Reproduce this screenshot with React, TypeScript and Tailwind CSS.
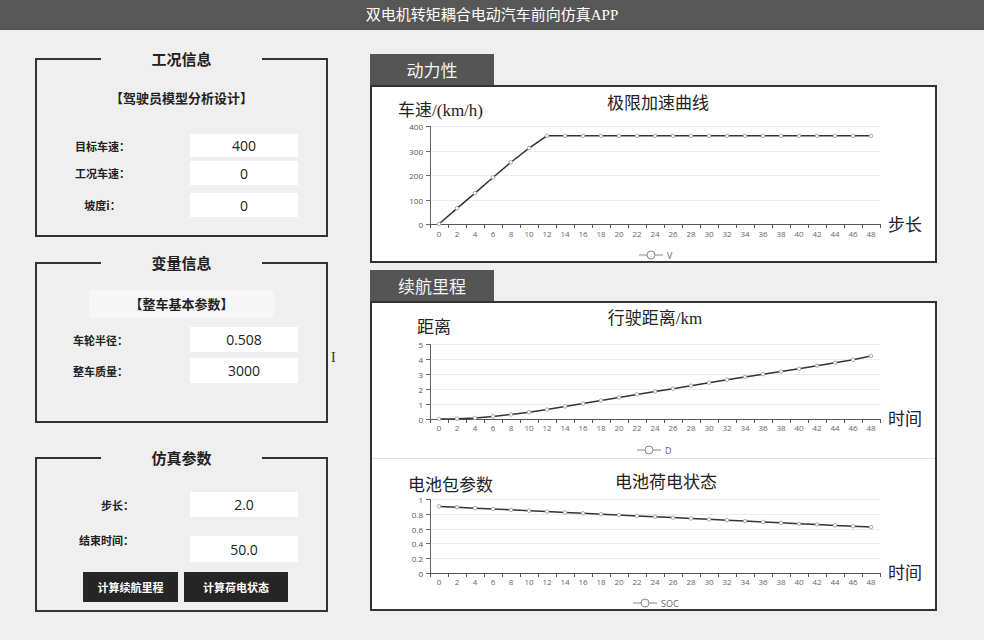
import React from 'react';

const SERIF = "font-['Liberation_Serif','Noto_Sans_CJK_SC',serif]";
const SANS = "font-['Noto_Sans_CJK_SC',sans-serif]";
const NUM = "font-['Open_Sans','Liberation_Sans',sans-serif]";
const SVG_SERIF = "'Liberation Serif', 'Noto Sans CJK SC', serif";
const SVG_SANS = "'Open Sans', 'Liberation Sans', sans-serif";

const steps = Array.from({ length: 25 }, (_, i) => i * 2);

const speed = steps.map((_, i) => (i < 6 ? [0, 64, 126, 190, 252, 310][i] : 360));
const dist = [0, 0.02, 0.07, 0.17, 0.3, 0.45, 0.63, 0.84, 1.03, 1.23, 1.44, 1.64, 1.84, 2.02, 2.22, 2.42, 2.62, 2.8, 2.99, 3.16, 3.35, 3.55, 3.75, 3.95, 4.2];
const soc = steps.map((_, i) => 0.9 - (i * 0.28) / 24);

type ChartProps = {
  height: number;
  top: number;
  bottom: number;
  max: number;
  ticks: string[];
  data: number[];
  title: string;
  titleX: number;
  titleY: number;
  yName: string;
  yNameX: number;
  yNameY: number;
  xName: string;
  xNameY: number;
  labelY: number;
  legend: string;
  legendX: number;
  legendY: number;
};

function LineChart(p: ChartProps) {
  const x0 = 58;
  const x1 = 508;
  const band = 18;
  const py = (v: number) => p.bottom - (v / p.max) * (p.bottom - p.top);
  const px = (i: number) => x0 + band / 2 + band * i;
  const pts = p.data.map((v, i) => `${px(i)},${py(v)}`).join(' ');

  return (
    <svg width={563} height={p.height} className="block">
      {p.ticks.map((t, i) => {
        const yy = Math.round(p.bottom - (i * (p.bottom - p.top)) / (p.ticks.length - 1)) + 0.5;
        return (
          <g key={t}>
            {i > 0 && <line x1={x0} x2={x1} y1={yy} y2={yy} stroke="#ececec" />}
            <line x1={x0 - 4} x2={x0} y1={yy} y2={yy} stroke="#666" />
            <text x={x0 - 7} y={yy + 3} textAnchor="end" fontSize="8" fill="#555" fontFamily={SVG_SANS}>
              {t}
            </text>
          </g>
        );
      })}
      <line x1={x0 + 0.5} x2={x0 + 0.5} y1={p.top} y2={p.bottom} stroke="#666" />
      <line x1={x0} x2={x1} y1={p.bottom + 0.5} y2={p.bottom + 0.5} stroke="#555" />
      {Array.from({ length: 26 }, (_, k) => (
        <line key={k} x1={x0 + band * k + 0.5} x2={x0 + band * k + 0.5} y1={p.bottom} y2={p.bottom + 4} stroke="#555" />
      ))}
      {steps.map((s, i) => (
        <text key={s} x={px(i)} y={p.labelY + 3} textAnchor="middle" fontSize="8" fill="#666" fontFamily={SVG_SANS}>
          {s}
        </text>
      ))}
      <polyline points={pts} fill="none" stroke="#333" strokeWidth="1.5" />
      {p.data.map((v, i) => (
        <circle key={i} cx={px(i)} cy={py(v)} r="1.8" fill="#fff" stroke="#999" strokeWidth="0.8" />
      ))}

      <text x={p.titleX} y={p.titleY} textAnchor="middle" dominantBaseline="central" fontSize="17" fill="#222" fontFamily={SVG_SERIF}>
        {p.title}
      </text>
      <text x={p.yNameX} y={p.yNameY} dominantBaseline="central" fontSize="17" fill="#222" fontFamily={SVG_SERIF}>
        {p.yName}
      </text>
      <text x={516} y={p.xNameY} dominantBaseline="central" fontSize="17" fill="#222" fontFamily={SVG_SERIF}>
        {p.xName}
      </text>

      <line x1={p.legendX - 12} x2={p.legendX + 12} y1={p.legendY} y2={p.legendY} stroke="#888" />
      <circle cx={p.legendX} cy={p.legendY} r="4" fill="#fff" stroke="#888" />
      <text x={p.legendX + 16} y={p.legendY} dominantBaseline="central" fontSize="9" fill="#666" fontFamily={SVG_SANS}>
        {p.legend}
      </text>
    </svg>
  );
}

function Field({ value, h }: { value: string; h: string }) {
  return (
    <div className={`w-[108px] ${h} bg-white flex items-center justify-center text-[14px] text-[#222] ${NUM}`}>{value}</div>
  );
}

function Panel({ title, children, className }: { title: string; children: React.ReactNode; className?: string }) {
  return (
    <fieldset className={`w-[293px] border-2 border-[#333] ${className ?? ''}`}>
      <legend className={`mx-auto px-[50px] text-[15px] leading-[20px] font-bold text-[#222] ${SANS}`}>{title}</legend>
      {children}
    </fieldset>
  );
}

export default function App() {
  const label = `text-[11px] leading-[16px] font-bold text-[#222] ${SANS}`;

  return (
    <div className="w-[984px] h-[640px] bg-[#efefef] overflow-hidden">
      <div className={`h-[30px] bg-[#575757] flex items-center justify-center text-white text-[15px] ${SERIF}`}>
        双电机转矩耦合电动汽车前向仿真APP
      </div>

      <div className="flex pl-[35px]">
        {/* left column */}
        <div className="w-[293px] pt-[19px] flex flex-col">
          <Panel title="工况信息" className="pb-[18px]">
            <div className={`mt-[21px] text-center text-[13px] leading-[16px] font-bold text-[#222] ${SANS}`}>
              【驾驶员模型分析设计】
            </div>
            <div className="mt-[28px] flex flex-col">
              <div className="flex items-center">
                <div className={`w-[131px] text-center ${label}`}>目标车速：</div>
                <div className="ml-[22px]">
                  <Field value="400" h="h-[23px]" />
                </div>
              </div>
              <div className="mt-[4px] flex items-center">
                <div className={`w-[131px] text-center ${label}`}>工况车速：</div>
                <div className="ml-[22px]">
                  <Field value="0" h="h-[24px]" />
                </div>
              </div>
              <div className="mt-[8px] flex items-center">
                <div className={`w-[131px] text-center ${label}`}>坡度i：</div>
                <div className="ml-[22px]">
                  <Field value="0" h="h-[24px]" />
                </div>
              </div>
            </div>
          </Panel>

          <Panel title="变量信息" className="mt-[16px] pb-[38px]">
            <div className={`mx-auto mt-[17px] w-[185px] h-[28px] bg-[#f6f6f6] flex items-center justify-center text-[13px] font-bold text-[#222] ${SANS}`}>
              【整车基本参数】
            </div>
            <div className="mt-[9px] flex items-center">
              <div className={`w-[127px] text-center ${label}`}>车轮半径：</div>
              <div className="ml-[26px]">
                <Field value="0.508" h="h-[25px]" />
              </div>
            </div>
            <div className="mt-[6px] flex items-center">
              <div className={`w-[127px] text-center ${label}`}>整车质量：</div>
              <div className="ml-[26px]">
                <Field value="3000" h="h-[25px]" />
              </div>
            </div>
          </Panel>

          <Panel title="仿真参数" className="mt-[25px] pb-[8px]">
            <div className="mt-[24px] flex items-center">
              <div className={`w-[153px] pr-[56px] text-right ${label}`}>步长：</div>
              <Field value="2.0" h="h-[25px]" />
            </div>
            <div className="mt-[15px] flex items-start">
              <div className={`w-[153px] pr-[56px] text-right ${label}`}>结束时间：</div>
              <div className="mt-[4px]">
                <Field value="50.0" h="h-[26px]" />
              </div>
            </div>
            <div className="mt-[10px] ml-[46px] flex gap-[6px]">
              <button className={`w-[95px] h-[30px] bg-[#262626] text-white text-[11px] font-bold ${SANS}`}>计算续航里程</button>
              <button className={`w-[104px] h-[30px] bg-[#262626] text-white text-[11px] font-bold ${SANS}`}>计算荷电状态</button>
            </div>
          </Panel>
        </div>

        {/* gap with text cursor */}
        <div className="w-[42px] pt-[320px] pl-[3px]">
          <span className={`block text-[14px] leading-[16px] text-[#333] ${SERIF}`}>I</span>
        </div>

        {/* right column */}
        <div className="w-[567px] pt-[24px] flex flex-col">
          <div className={`w-[124px] h-[31px] bg-[#555] flex items-center justify-center text-[17px] text-[#f2f2f2] ${SANS}`}>
            动力性
          </div>
          <div className="border-2 border-[#333] bg-white">
            <LineChart
              height={174}
              top={39}
              bottom={137}
              max={400}
              ticks={['0', '100', '200', '300', '400']}
              data={speed}
              title="极限加速曲线"
              titleX={286}
              titleY={16}
              yName="车速/(km/h)"
              yNameX={26}
              yNameY={23}
              xName="步长"
              xNameY={138}
              labelY={147}
              legend="V"
              legendX={279}
              legendY={168}
            />
          </div>

          <div className={`mt-[7px] w-[124px] h-[31px] bg-[#555] flex items-center justify-center text-[17px] text-[#f2f2f2] ${SANS}`}>
            续航里程
          </div>
          <div className="border-2 border-[#333] bg-white flex flex-col">
            <LineChart
              height={155}
              top={41}
              bottom={116}
              max={5}
              ticks={['0', '1', '2', '3', '4', '5']}
              data={dist}
              title="行驶距离/km"
              titleX={283}
              titleY={15}
              yName="距离"
              yNameX={45}
              yNameY={24}
              xName="时间"
              xNameY={116}
              labelY={125}
              legend="D"
              legendX={277}
              legendY={147}
            />
            <div className="border-t border-[#e2e2e2]">
              <LineChart
                height={150}
                top={40}
                bottom={114}
                max={1}
                ticks={['0', '0.2', '0.4', '0.6', '0.8', '1']}
                data={soc}
                title="电池荷电状态"
                titleX={294}
                titleY={23}
                yName="电池包参数"
                yNameX={36}
                yNameY={26}
                xName="时间"
                xNameY={114}
                labelY={123}
                legend="SOC"
                legendX={273}
                legendY={144}
              />
            </div>
          </div>
        </div>
      </div>
    </div>
  );
}
